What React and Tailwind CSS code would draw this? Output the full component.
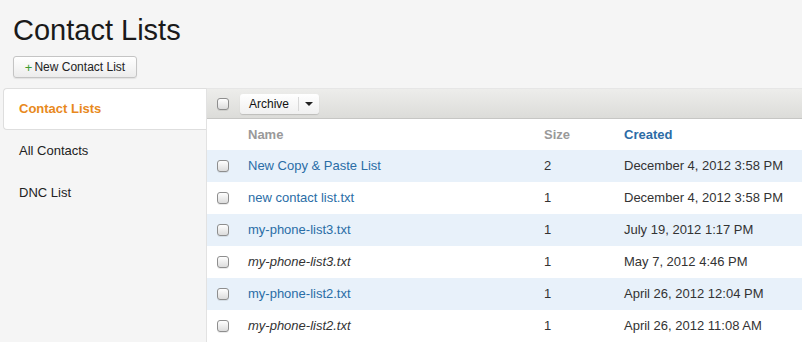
const rows = [
  { name: "New Copy & Paste List", size: 2, created: "December 4, 2012 3:58 PM", link: true },
  { name: "new contact list.txt", size: 1, created: "December 4, 2012 3:58 PM", link: true },
  { name: "my-phone-list3.txt", size: 1, created: "July 19, 2012 1:17 PM", link: true },
  { name: "my-phone-list3.txt", size: 1, created: "May 7, 2012 4:46 PM", link: false },
  { name: "my-phone-list2.txt", size: 1, created: "April 26, 2012 12:04 PM", link: true },
  { name: "my-phone-list2.txt", size: 1, created: "April 26, 2012 11:08 AM", link: false },
];

function Checkbox() {
  return (
    <span className="block w-[12px] h-[12px] rounded-[3px] border border-[#8e8e8e] bg-gradient-to-b from-white to-[#dcdcdc] shadow-[0_1px_0_rgba(0,0,0,0.08)]" />
  );
}

export default function App() {
  return (
    <div
      className="w-[802px] h-[342px] overflow-hidden bg-[#f5f5f5] text-[#333]"
      style={{ fontFamily: '"Liberation Sans", Arial, sans-serif' }}
    >
      <div className="px-[13px] pt-[12px]">
        <h1 className="text-[29px] leading-[36px] text-[#1a1a1a]">Contact Lists</h1>
        <button className="mt-[8px] h-[22px] w-[124px] rounded-[3px] border border-[#c4c4c4] bg-gradient-to-b from-white to-[#ececec] text-[12px] text-[#222] shadow-[0_1px_1px_rgba(0,0,0,0.08)] flex items-center justify-center gap-[2px]">
          <span className="text-[#3d9b2e] text-[13px] leading-none">+</span>
          <span>New Contact List</span>
        </button>
      </div>

      <div className="mt-[10px] flex">
        <div className="w-[206px] shrink-0 pl-[3px]">
          <div className="h-[42px] bg-white border border-r-0 border-[#dedede] rounded-l-[4px] flex items-center pl-[15px] text-[13px] font-bold text-[#e8891c]">
            Contact Lists
          </div>
          <div className="h-[42px] flex items-center pl-[16px] text-[13px] text-[#222]">All Contacts</div>
          <div className="h-[42px] flex items-center pl-[16px] text-[13px] text-[#222]">DNC List</div>
        </div>

        <div className="flex-1 bg-white border-l border-[#e2e2e2]">
          <div className="h-[31px] border-t border-[#e6e6e6] border-b border-b-[#c6c6c4] bg-gradient-to-b from-[#ededeb] to-[#dcdcd9] flex items-center pl-[10px]">
            <Checkbox />
            <div className="ml-[11px] h-[20px] w-[79px] rounded-[3px] bg-gradient-to-b from-white to-[#f0f0f0] shadow-[0_1px_1px_rgba(0,0,0,0.15)] flex items-center text-[12px] text-[#111]">
              <span className="w-[59px] text-center border-r border-[#d8d8d8] leading-[14px]">Archive</span>
              <span className="flex-1 flex justify-center">
                <span className="w-0 h-0 border-l-[4px] border-r-[4px] border-t-[4px] border-l-transparent border-r-transparent border-t-[#222]" />
              </span>
            </div>
          </div>

          <div className="grid grid-cols-[41px_296px_80px_1fr] h-[31px] items-center text-[13px] font-bold">
            <span />
            <span className="text-[#999]">Name</span>
            <span className="text-[#999]">Size</span>
            <span className="text-[#2c6ca6]">Created</span>
          </div>

          {rows.map((r, i) => (
            <div
              key={i}
              className={`grid grid-cols-[41px_296px_80px_1fr] h-[32px] items-center text-[13px] ${
                i % 2 === 0 ? "bg-[#e8f1fa]" : "bg-white"
              }`}
            >
              <span className="pl-[10px]">
                <Checkbox />
              </span>
              <span className={r.link ? "text-[#2a6da6]" : "italic text-[#333]"}>{r.name}</span>
              <span className="text-[#333]">{r.size}</span>
              <span className="text-[#333]">{r.created}</span>
            </div>
          ))}
        </div>
      </div>
    </div>
  );
}
